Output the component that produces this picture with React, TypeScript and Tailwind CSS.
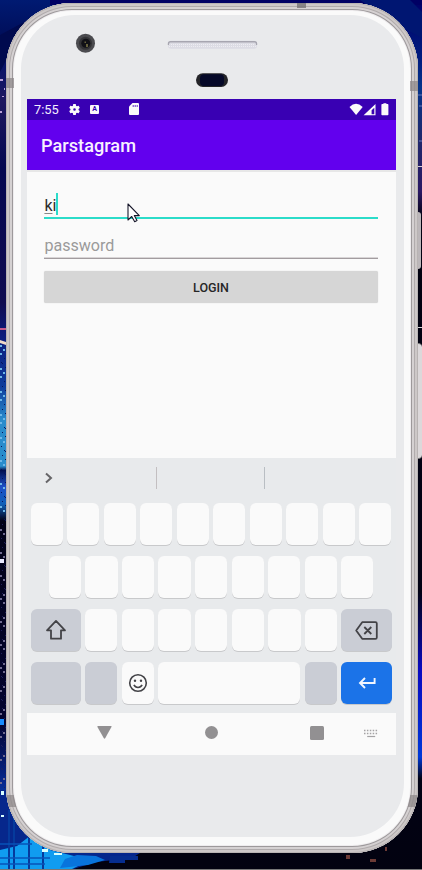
import type { ReactNode } from "react";

const cityLights = Array.from({ length: 150 }, (_, i) => {
  const y = 345 + ((i * 83) % 475);
  return { x: (i * 5) % 6, y, bright: i % 3 === 0, lower: y > 520 };
});

function CityBackdrop() {
  return (
    <svg className="absolute inset-0" width="422" height="870" viewBox="0 0 422 870" aria-hidden="true">
      <defs>
        <linearGradient id="leftSky" x1="0" y1="0" x2="0" y2="1">
          <stop offset="0" stopColor="#001a72" />
          <stop offset=".04" stopColor="#000f5c" />
          <stop offset=".08" stopColor="#0a1468" />
          <stop offset=".12" stopColor="#1d1860" />
          <stop offset=".2" stopColor="#050850" />
          <stop offset=".36" stopColor="#100c50" />
          <stop offset=".4" stopColor="#0c1c7c" />
          <stop offset=".46" stopColor="#0f3c9c" />
          <stop offset=".5" stopColor="#2a8ccc" />
          <stop offset=".555" stopColor="#2a8ccc" />
          <stop offset=".56" stopColor="#031050" />
          <stop offset=".58" stopColor="#1c50c8" />
          <stop offset=".6" stopColor="#1060b8" />
          <stop offset=".62" stopColor="#020218" />
          <stop offset=".86" stopColor="#040430" />
          <stop offset=".93" stopColor="#06268c" />
          <stop offset="1" stopColor="#0b6fd8" />
        </linearGradient>
        <linearGradient id="rightSky" x1="0" y1="0" x2="0" y2="1">
          <stop offset="0" stopColor="#000068" />
          <stop offset=".07" stopColor="#001d80" />
          <stop offset=".1" stopColor="#05338a" />
          <stop offset=".16" stopColor="#20286c" />
          <stop offset=".22" stopColor="#2a1864" />
          <stop offset=".25" stopColor="#020210" />
          <stop offset=".68" stopColor="#020214" />
          <stop offset=".77" stopColor="#0a0ac0" />
          <stop offset=".87" stopColor="#0038d8" />
          <stop offset=".895" stopColor="#020214" />
          <stop offset="1" stopColor="#020210" />
        </linearGradient>
      </defs>
      <rect width="422" height="870" fill="#020210" />
      <rect width="211" height="840" fill="url(#leftSky)" />
      <rect x="211" width="211" height="870" fill="url(#rightSky)" />
      <path d="M50 0H422V5H50Z" fill="#000064" />
      <path d="M0 35 28 20 9 55 0 72Z" fill="#000a4e" />
      <path d="M360 0h50l12 12v26l-30-16z" fill="#001672" />
      <path d="M0 79h3v2H0zM2 96h2v1H2zM0 111h2v2H0zM4 88h1v2H4z" fill="#b9a0d8" />
      {cityLights.map((l, i) => (
        <rect key={i} x={l.x} y={l.y} width={l.bright ? 2 : 1} height={l.bright ? 2 : 1}
          fill={l.lower ? (l.bright ? "#6f6a90" : "#20205c") : l.bright ? "#6cb6e8" : "#06145c"} />
      ))}
      <path d="M0 328h6v2H0z" fill="#c45a8c" />
      <path d="M0 340l6 2v3l-6-2z" fill="#f0d8c8" />
      <path d="M0 559h4v4H0z" fill="#e8e8ff" />
      <path d="M0 719h4v6H0z" fill="#188cff" />
      <path d="M0 790H20L75 853H140L132 858 96 862 70 870H0Z" fill="#06278c" />
      <path d="M0 850 17 846 35 832 50 850 90 860 70 870H0Z" fill="#109cf0" />
      <path d="M14 800v70M9 810v60M29 835v35M43 840v30" stroke="#053a9c" strokeWidth="2" />
      <path d="M0 858h50M0 864h45M0 844h32" stroke="#0753b8" strokeWidth="1.5" />
      <path d="M42 849h6v3h-6zM54 853h8v2h-8zM1 791h3v4H1zM1 815h3v2H1z" fill="#d8ffff" />
      <path d="M65 859 77 855 96 856 105 860 88 865 60 868Z" fill="#0874dc" />
      <path d="M110 856h28v4h-13v3h-16z" fill="#062d90" />
      <path d="M346 855h4v4h-4zM370 859h6v3h-6zM385 847h2v4h-2z" fill="#6c3b36" />
      <path d="M418 166h4v1h-4z" fill="#d5cdd5" />
      <path d="M418 327h4v1h-4z" fill="#d5d5d5" />
      <path d="M418 95h4M419 106h3M419 141h3" stroke="#6678bd" />
      <path d="M0 869.5H422" stroke="#777" />
    </svg>
  );
}

function FrontHardware() {
  return (
    <svg className="block shrink-0" width="382" height="84" viewBox="21 15 382 84" aria-hidden="true">
      <circle cx="85.5" cy="43.3" r="9.5" fill="#4b4b4f" />
      <circle cx="85.5" cy="43.3" r="6.5" fill="#333336" />
      <circle cx="85.8" cy="43.3" r="4.5" fill="#111116" />
      <path d="M84.5 41.5h1.5v1.5h-1.5zM86 44h2v3h-2z" fill="#65613c" />
      <rect x="168" y="40.8" width="89" height="8" rx="3" fill="#dcdce4" />
      <path d="M169 44.5h87M169 46.5h87" stroke="#eeedf2" strokeDasharray="1 1" />
      <path d="M168.5 45v-1.4q0-1.8 2-1.8h84q2 0 2 1.8V45" fill="none" stroke="#a7a6b0" strokeWidth="1.4" />
      <rect x="196" y="73.3" width="32" height="13.6" rx="6.8" fill="#242428" />
      <rect x="200" y="74.3" width="24" height="11.6" rx="4" fill="#050828" />
    </svg>
  );
}

function StatusBar() {
  return (
    <div className="flex h-[21px] shrink-0 items-center bg-[#3900b3] pl-[7px] pr-[7px] text-[#f4eeff]">
      <span className="w-[34px] pt-px text-[12.8px] leading-[21px]">7:55</span>
      <svg width="13" height="13" viewBox="0 0 24 24" fill="#fafafa">
        <path d="M19.43 12.98c.04-.32.07-.64.07-.98s-.03-.66-.07-.98l2.11-1.65c.19-.15.24-.42.12-.64l-2-3.46c-.12-.22-.39-.3-.61-.22l-2.49 1a7.3 7.3 0 0 0-1.69-.98l-.38-2.65A.49.49 0 0 0 14 2h-4c-.25 0-.46.18-.49.42l-.38 2.65c-.61.25-1.17.59-1.69.98l-2.49-1c-.23-.09-.49 0-.61.22l-2 3.46c-.13.22-.07.49.12.64l2.11 1.65a7.9 7.9 0 0 0 0 1.96l-2.11 1.65c-.19.15-.24.42-.12.64l2 3.46c.12.22.39.3.61.22l2.49-1c.52.4 1.08.73 1.69.98l.38 2.65c.03.24.24.42.49.42h4c.25 0 .46-.18.49-.42l.38-2.65c.61-.25 1.17-.59 1.69-.98l2.49 1c.23.09.49 0 .61-.22l2-3.46c.12-.22.07-.49-.12-.64zM12 14.4a2.4 2.4 0 1 1 0-4.8 2.4 2.4 0 0 1 0 4.8z" />
      </svg>
      <span className="ml-[9px] flex h-[9px] w-[9px] items-center justify-center rounded-[1px] bg-[#fafafa] text-[7px] font-bold leading-none text-[#3900b3]">A</span>
      <svg className="ml-[30px]" width="10" height="12" viewBox="0 0 10 12">
        <path d="M3.5 0H9q1 0 1 1v10q0 1-1 1H1q-1 0-1-1V3.5z" fill="#fafafa" />
        <path d="M4.2 2v2M6.2 2v2M8.2 2v2" stroke="#3900b3" strokeWidth=".8" />
      </svg>
      <svg className="ml-auto" width="40" height="13" viewBox="0 0 40 13" fill="#fafafa">
        <path d="M.5 4.1Q7-2.4 13.7 4.1L7.1 12z" />
        <path fillRule="evenodd" d="M26.5 1v11.3H14.6zm-1.2 3.7-2.7 2.6v3.9h2.7z" />
        <path d="M34.4 1V.2h3V1h1.2q.8 0 .8.8v9.7q0 .8-.8.8h-5.4q-.8 0-.8-.8V1.8q0-.8.8-.8z" />
      </svg>
    </div>
  );
}

function LoginForm() {
  return (
    <div className="flex h-[286px] shrink-0 flex-col bg-[#fafafa] pl-[17.4px] pr-[18px] pt-[21px]">
      <div className="relative flex h-[26px] border-b-2 border-[#2bdcc9] text-[16px] leading-[25px] text-[#2b2b2b]">
        <span>
          <span className="underline decoration-[#888] decoration-1 underline-offset-[2px]">k</span>i
        </span>
        <span className="h-[22px] w-[2px] bg-[#2bdcc9]" />
        <svg className="absolute left-[82.4px] top-[10px]" width="14" height="22" viewBox="0 0 14 22">
          <path d="M1 1v16l3.7-3.5 3 5.3 2.3-1.2-2.7-5h5z" fill="#fff" stroke="#17172a" strokeWidth="1.1" strokeLinejoin="round" />
        </svg>
      </div>
      <div className="h-[40px] pt-[14px] text-[16.1px] leading-[25px] text-[#9a9a9a] shadow-[inset_0_-1px_0_#a29c9f,inset_0_-2px_0_#d8d5d6]">password</div>
      <button className="-ml-[0.4px] mt-[12px] h-[32.5px] rounded-[2px] bg-[#d6d6d6] pt-[1.5px] text-[12.5px] font-medium text-[#262626] shadow-[0_0_1px_#ccc]">LOGIN</button>
    </div>
  );
}

type KeyProps = { size?: string; tone?: string; children?: ReactNode };

function Key({ size = "w-[32.3px]", tone = "bg-[#fafafa]", children }: KeyProps) {
  return (
    <div className={`flex h-[42.3px] shrink-0 items-center justify-center rounded-[6px] shadow-[0_1px_0_#c8c9cb] ${size} ${tone}`}>
      {children}
    </div>
  );
}

const row = "flex h-[42.3px] justify-between";
const keys = (n: number) => Array.from({ length: n }, (_, i) => <Key key={i} />);
const wide = "w-[50.1px]";
const muted = "bg-[#cacdd5]";

function Keyboard() {
  return (
    <div className="flex h-[255px] shrink-0 flex-col bg-[#e8eaec]">
      <div className="flex h-[45.1px] items-start pl-[18px] pt-[9px]">
        <svg className="mt-[5px]" width="8" height="12" viewBox="0 0 8 12" fill="none" stroke="#666568" strokeWidth="2">
          <path d="m1 1.5 5 4.5-5 4.5" />
        </svg>
        <span className="ml-[103px] h-[22px] w-px bg-[#c3bfc1]" />
        <span className="ml-[107px] h-[22px] w-px bg-[#b9bec3]" />
      </div>
      <div className="flex flex-col gap-[10.6px] pl-[3.7px] pr-[4.4px]">
        <div className={row}>{keys(10)}</div>
        <div className={`${row} px-[18.1px]`}>{keys(9)}</div>
        <div className={row}>
          <Key size={wide} tone={muted}>
            <svg width="22" height="22" viewBox="0 0 22 22" fill="none" stroke="#434347" strokeWidth="1.8" strokeLinejoin="round">
              <path d="M11 1.9 20 11.3H16v8.4H6v-8.4H2z" />
            </svg>
          </Key>
          {keys(7)}
          <Key size={wide} tone={muted}>
            <svg className="mt-px" width="23" height="19" viewBox="0 0 23 19" fill="none" stroke="#434347" strokeWidth="1.8" strokeLinejoin="round">
              <path d="M7.2 1.2h13.2q1.4 0 1.4 1.4v13.8q0 1.4-1.4 1.4H7.2L1.2 9.5zM9.3 6l7 7m0-7-7 7" />
            </svg>
          </Key>
        </div>
        <div className={row}>
          <Key size={wide} tone={muted} />
          <Key tone={muted} />
          <Key>
            <svg width="20" height="20" viewBox="0 0 20 20" fill="none" stroke="#434347" strokeWidth="1.6">
              <circle cx="10" cy="10" r="8.3" />
              <path d="M5.9 11.9q1.3 2.6 4.1 2.6t4.1-2.6" />
              <circle cx="7" cy="7.8" r="1.2" fill="#434347" stroke="none" />
              <circle cx="13" cy="7.8" r="1.2" fill="#434347" stroke="none" />
            </svg>
          </Key>
          <Key size="w-[142px]" />
          <Key tone={muted} />
          <Key size={wide} tone="bg-[#1b73e8]">
            <svg className="mt-px" width="18" height="12" viewBox="0 0 18 12" fill="none" stroke="#f1f6ff" strokeWidth="1.9">
              <path d="M16.6 1v5H2m5-5L2 6l5 5" />
            </svg>
          </Key>
        </div>
      </div>
    </div>
  );
}

function NavBar() {
  return (
    <div className="flex h-[42px] shrink-0 items-start bg-[#fafafa] pl-[70px] pt-[13px]">
      <svg width="15" height="13" viewBox="0 0 15 13" fill="#929092"><path d="M1 0h13q1 0 .6.8L8.3 12q-.8 1.3-1.6 0L.3.8Q0 0 1 0z" /></svg>
      <span className="ml-[92.6px] mt-[0.5px] h-[13px] w-[13px] rounded-full bg-[#929092]" />
      <span className="ml-[92.9px] mt-[0.5px] h-[13.6px] w-[13.6px] rounded-[1.5px] bg-[#929092]" />
      <svg className="ml-[39.4px] mt-[3px]" width="16" height="9" viewBox="0 0 16 9" stroke="#a4a2a4" fill="none">
        <path d="M1 1.5h14M1 4.5h14" strokeWidth="1.3" strokeDasharray="1.5 1.4" />
        <path d="M4.2 7.5h8" strokeWidth="1.2" />
      </svg>
    </div>
  );
}

export default function App() {
  return (
    <main className="relative h-[870px] w-[422px] overflow-hidden pl-[6.3px] pt-[3.3px] font-[Roboto,'Open_Sans',sans-serif]">
      <CityBackdrop />
      <div className="absolute left-[417.5px] top-[212px] h-[57px] w-[3.5px] rounded-r-sm bg-[#bcb7ba]" />
      <div className="absolute left-[417.5px] top-[343px] h-[116px] w-[4.5px] rounded-r-sm border-y border-[#777] bg-[#dcd8da]" />
      <div className="relative h-[850.2px] w-[412.2px] overflow-hidden rounded-[66px] bg-[#fafafa] px-[14.7px] pb-[16px] pt-[11.7px] shadow-[inset_0_0_0_1px_#b8b3b3,inset_0_0_0_3px_#cdc8c8,inset_0_0_0_4px_#b0abac,inset_0_0_0_6px_#d5d1d2,inset_0_0_0_7px_#9d999b,inset_0_0_0_8px_#eeecee]">
        <div className="flex h-[822.5px] flex-col rounded-[54px] bg-[#e9eaec]">
          <FrontHardware />
          <div className="mx-[6px] flex h-[656px] w-[369px] shrink-0 flex-col">
            <StatusBar />
            <header className="flex h-[50px] shrink-0 items-center bg-[#6200ee] pl-[14px] pt-[2px] text-[18.2px] font-medium text-[#f8f2ff]">Parstagram</header>
            <div className="h-[2px] shrink-0 bg-[#e7e7e7]" />
            <LoginForm />
            <Keyboard />
            <NavBar />
          </div>
        </div>
        <span className="absolute left-0 top-[75px] h-[10px] w-[7.5px] bg-[#8d888a]/75" />
        <span className="absolute right-0 top-[78px] h-[10px] w-[8px] bg-[#8d888a]/75" />
        <span className="absolute left-[291px] top-0 h-[5px] w-[9px] bg-[#777375]/80" />
        <span className="absolute bottom-[46px] left-[1px] h-[12px] w-[8px] skew-x-12 bg-[#8d888a]/75" />
        <span className="absolute bottom-[46px] right-[1px] h-[12px] w-[8px] -skew-x-12 bg-[#8d888a]/75" />
      </div>
    </main>
  );
}
